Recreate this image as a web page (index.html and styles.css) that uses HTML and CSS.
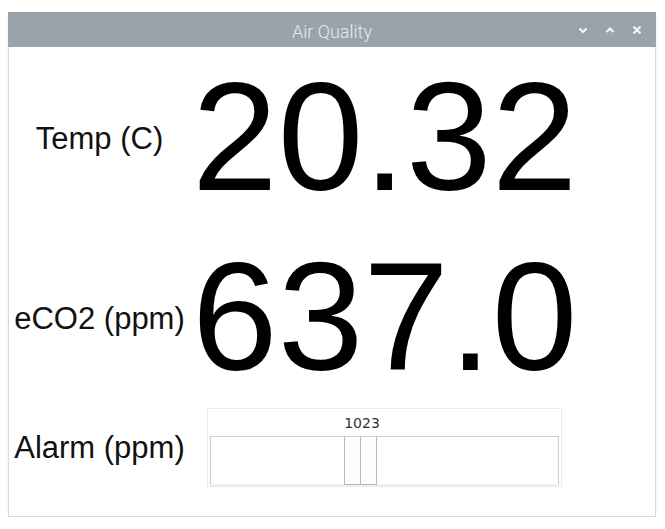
FILE: index.html
```html
<!DOCTYPE html>
<html lang="en">
<head>
    <meta charset="UTF-8">
    <title>Air Quality</title>
    <link rel="stylesheet" href="styles.css">
</head>
<body>
    <div class="window">
        <div class="titlebar">
            <span class="title">Air Quality</span>
            <div class="controls">
                <svg width="12" height="12" viewBox="0 0 12 12"><path d="M2.5 4.5 L6 8 L9.5 4.5" /></svg>
                <svg width="12" height="12" viewBox="0 0 12 12"><path d="M2.5 8 L6 4.5 L9.5 8" /></svg>
                <svg width="12" height="12" viewBox="0 0 12 12"><path d="M2.5 2.5 L9.5 9.5 M9.5 2.5 L2.5 9.5" /></svg>
            </div>
        </div>
        <div class="content">
            <div class="row row-big">
                <div class="label">Temp (C)</div>
                <div class="value">20.32</div>
            </div>
            <div class="row row-big">
                <div class="label">eCO2 (ppm)</div>
                <div class="value">637.0</div>
            </div>
            <div class="row row-scale">
                <div class="label">Alarm (ppm)</div>
                <div class="scale">
                    <div class="scale-value"><span class="scale-num" style="left: 154px;">1023</span></div>
                    <div class="trough">
                        <div class="handle" style="left: 133px;"></div>
                    </div>
                </div>
            </div>
        </div>
    </div>
</body>
</html>
```

FILE: styles.css
```css
body {
    margin: 0;
    background: #ffffff;
    font-family: 'Liberation Sans', Arial, sans-serif;
}
.window {
    margin: 12px 0 0 8px;
    width: 648px;
    height: 505px;
    box-sizing: border-box;
    border: 1px solid #dadada;
    border-top: none;
    box-shadow: 0 1px 2px rgba(0,0,0,0.08);
    display: flex;
    flex-direction: column;
}
.titlebar {
    height: 35px;
    margin: 0 -1px;
    background: #9aa2aa;
    position: relative;
    display: flex;
    align-items: center;
    justify-content: center;
}
.title {
    font-family: Roboto, 'Noto Sans', sans-serif;
    font-weight: 300;
    font-size: 18px;
    color: #e6e9ec;
    padding-top: 3px;
}
.controls {
    position: absolute;
    right: 13px;
    top: 12px;
    display: flex;
    gap: 15px;
}
.controls svg path {
    fill: none;
    stroke: #f4f5f6;
    stroke-width: 2.2;
}
.content {
    flex: 1;
    display: flex;
    flex-direction: column;
}
.row {
    display: grid;
    grid-template-columns: 180px 1fr;
    align-items: center;
}
.row-big {
    height: 180px;
}
.row-big .label {
    padding-top: 2px;
}
.label {
    font-size: 31px;
    line-height: 1;
    color: #111;
    text-align: center;
    padding-left: 1px;
}
.value {
    font-size: 154px;
    line-height: 1;
    color: #000;
    padding-left: 3px;
}
.row-scale {
    height: 80px;
}
.scale {
    margin-left: 18px;
    width: 355px;
    height: 79px;
    box-sizing: border-box;
    border: 1px solid #ebebeb;
    display: flex;
    flex-direction: column;
}
.scale-value {
    height: 27px;
    position: relative;
}
.scale-num {
    position: absolute;
    top: 6px;
    transform: translateX(-50%);
    font-family: 'DejaVu Sans', sans-serif;
    font-size: 14px;
    color: #333;
}
.trough {
    margin: 0 2px;
    height: 47px;
    border: 1px solid #cfcfcf;
    border-bottom-color: #f0f0f0;
    position: relative;
    box-shadow: 0 1px 1px rgba(0,0,0,0.05);
}
.handle {
    position: absolute;
    top: 0;
    bottom: -1px;
    width: 33px;
    box-sizing: border-box;
    border: 1px solid #b8b8b8;
    border-top: none;
    background: #fdfdfd;
}
.handle::after {
    content: '';
    position: absolute;
    left: 15px;
    top: 0;
    bottom: 0;
    width: 1px;
    background: #b8b8b8;
}
```
